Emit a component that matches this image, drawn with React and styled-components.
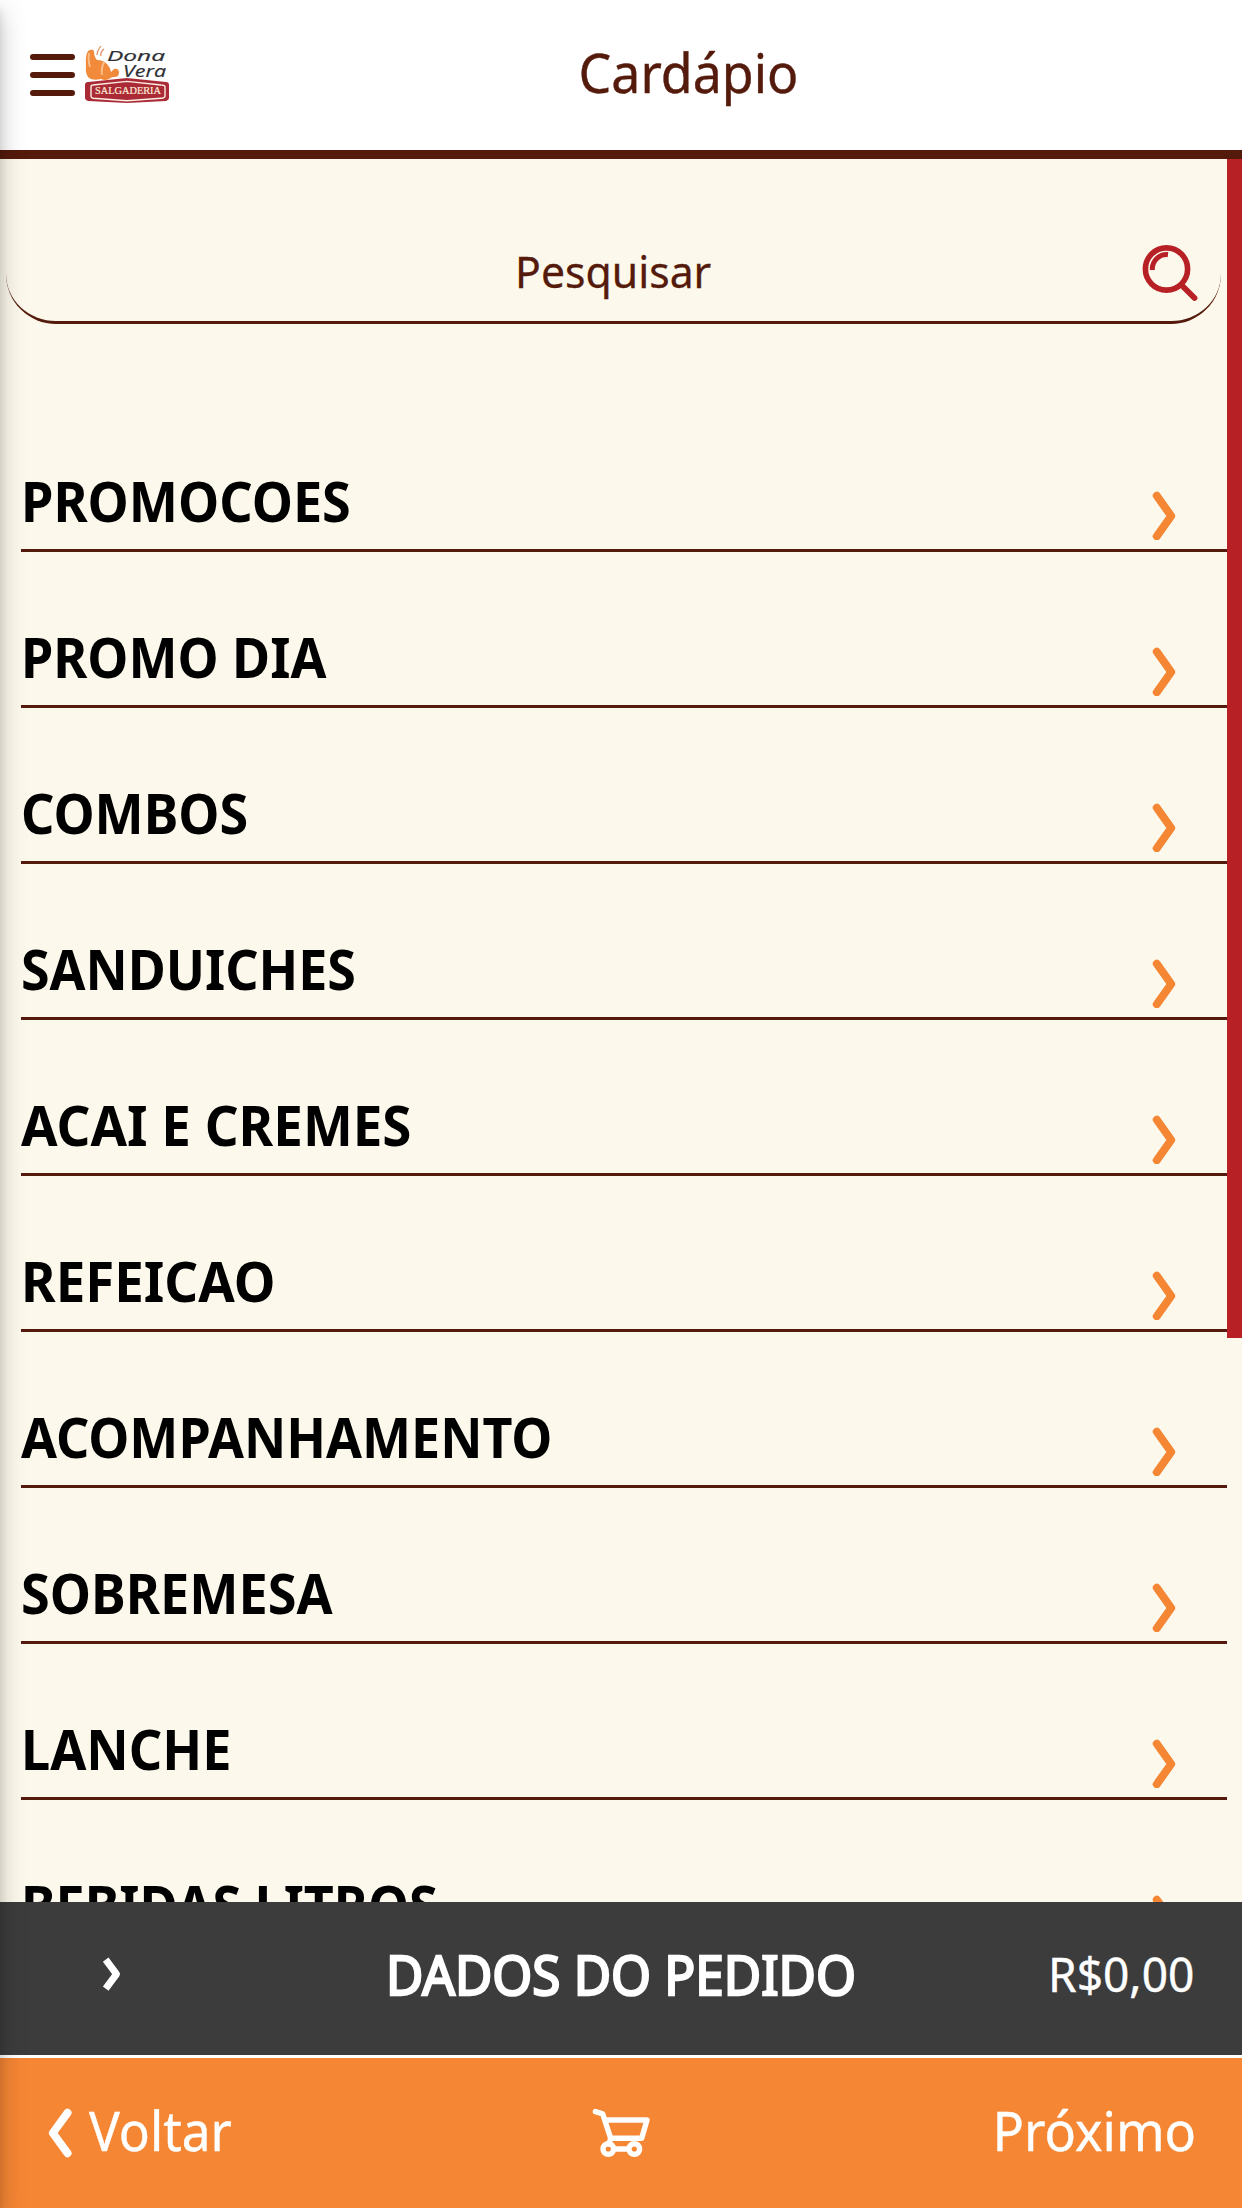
import React from "react";
import styled, { createGlobalStyle } from "styled-components";

const brown = "#541a0b";
const cream = "#fcf8ec";
const red = "#b72025";
const orange = "#f58634";

const GlobalStyle = createGlobalStyle`
  * { box-sizing: border-box; }
  body {
    margin: 0;
    overflow: hidden;
    font-family: "Noto Sans", "Open Sans", sans-serif;
  }
`;

const Screen = styled.div`
  display: flex;
  flex-direction: column;
  width: 1242px;
  height: 2208px;
  overflow: hidden;
  background: ${cream};
`;

const DrawerEdge = styled.div`
  position: fixed;
  top: 0;
  left: -400px;
  width: 400px;
  height: 2208px;
  pointer-events: none;
  box-shadow: 0 8px 10px -1px rgba(0, 0, 0, 0.12),
    0 16px 24px 0 rgba(0, 0, 0, 0.13), 0 6px 28px 2px rgba(0, 0, 0, 0.1);
`;

const Label = styled.span`
  display: block;
  white-space: nowrap;
  font-size: ${(p) => p.$size}px;
  font-weight: ${(p) => p.$weight || 400};
  line-height: 60px;
  -webkit-text-stroke: ${(p) => p.$stroke || 0}px currentColor;
  transform: scaleX(${(p) => p.$fit || 1});
  transform-origin: ${(p) => p.$origin || "center"};
`;

const Header = styled.header`
  display: flex;
  flex: none;
  align-items: center;
  height: 159px;
  padding: 0 38px 0 30px;
  background: #fff;
  color: ${brown};
  border-bottom: 9px solid ${brown};
`;

const MenuButton = styled.div`
  display: flex;
  flex-direction: column;
  gap: 12px;
  width: 45px;
`;

const MenuBar = styled.span`
  height: 6px;
  border-radius: 3px;
  background: ${brown};
`;

const LogoBox = styled.div`
  display: flex;
  width: 97px;
  padding-left: 9px;
`;

const Title = styled.h1`
  display: flex;
  flex: 1;
  justify-content: center;
  margin: 0;
  padding-bottom: 6px;
`;

const Body = styled.main`
  display: flex;
  flex: 1;
  min-height: 0;
  overflow: hidden;
`;

const Content = styled.div`
  flex: 1;
  padding-top: 60px;
`;

const ScrollTrack = styled.div`
  width: 15px;
`;

const ScrollThumb = styled.div`
  height: 1179px;
  background: ${red};
`;

const SearchField = styled.div`
  display: grid;
  grid-template-columns: 80px 1fr 80px;
  align-items: center;
  justify-items: center;
  height: 105px;
  margin: 0 6px 72px;
  padding-top: 2px;
  color: ${brown};
  border-bottom: 3px solid ${brown};
  border-radius: 50px;
`;

const SearchIcon = styled.svg`
  justify-self: start;
  margin: 4px 0 0 1px;
`;

const List = styled.ul`
  margin: 0;
  padding: 0 0 0 21px;
  list-style: none;
`;

const Row = styled.li`
  display: flex;
  align-items: flex-end;
  justify-content: space-between;
  height: 156px;
  padding-right: 50px;
  border-bottom: 3px solid ${brown};
  color: #000;
`;

const RowName = styled.div`
  padding-bottom: 18px;
`;

const RowArrow = styled.svg`
  margin-bottom: 9px;
`;

const OrderBar = styled.section`
  display: grid;
  grid-template-columns: 240px 1fr 240px;
  flex: none;
  align-items: center;
  justify-items: center;
  height: 153px;
  padding-bottom: 9px;
  background: #3c3c3c;
  color: #fff;
`;

const OrderArrow = styled.svg`
  justify-self: start;
  margin-left: 102px;
`;

const OrderTotal = styled.div`
  justify-self: end;
  margin-right: 48px;
`;

const NavBar = styled.nav`
  display: grid;
  grid-template-columns: 1fr 58px 1fr;
  flex: none;
  align-items: center;
  height: 153px;
  padding: 0 46px 6px 46px;
  border-top: 3px solid #fff;
  background: ${orange};
  color: #fff;
`;

const NavAction = styled.div`
  display: flex;
  align-items: center;
  gap: 17px;
  justify-content: ${(p) => (p.$end ? "flex-end" : "flex-start")};
`;

const NavIcon = styled.svg`
  margin-top: 6px;
`;

const categories = [
  ["PROMOCOES", 0.948],
  ["PROMO DIA", 0.945],
  ["COMBOS", 0.947],
  ["SANDUICHES", 0.944],
  ["ACAI E CREMES", 0.961],
  ["REFEICAO", 0.96],
  ["ACOMPANHAMENTO", 0.945],
  ["SOBREMESA", 0.949],
  ["LANCHE", 0.949],
  ["BEBIDAS LITROS", 0.945],
];

const Logo = () => (
  <svg width="88" height="64" viewBox="0 0 88 64">
    <path
      d="M4 8Q8 5 10 8Q10 14 13 17Q19 17 23 21Q26 24 27 29L30 26Q35 25 35 30Q35 34 30 34Q27 34 25 36Q21 38 17 36Q9 38 5 35Q1 31 2 23Q1 13 4 8Z"
      fill="#f28a3c"
    />
    <path d="M5 10Q4 18 6 24M20 19Q17 25 18 32" fill="none" stroke="#f9bd86" strokeWidth="2" />
    <path d="M13 12Q13 8 17 3M17 13Q16 9 20 6" fill="none" stroke="#d98a5a" strokeWidth="1.2" />
    <text x="23" y="17.6" fontFamily="Open Sans" fontStyle="italic" fontSize="15" fill="#2e2e33" stroke="#2e2e33" strokeWidth=".2" textLength="58" lengthAdjust="spacingAndGlyphs">Dona</text>
    <text x="39" y="33.8" fontFamily="Open Sans" fontStyle="italic" fontSize="17" fill="#2e2e33" stroke="#2e2e33" strokeWidth=".2" textLength="43" lengthAdjust="spacingAndGlyphs">Vera</text>
    <path d="M4 39L43 35L82 39Q85 39 85 42V55Q85 57 82 58L43 60L4 58Q1 57 1 55V42Q1 39 4 39Z" fill="#aa2b36" />
    <path d="M9 42L43 38.4L77 42Q81 42 81 44V53Q81 55 77 55.3L43 57.8L9 55.3Q7 55 7 53V44Q7 42 9 42Z" fill="none" stroke="#fbeee4" strokeWidth="1.4" />
    <text x="11" y="50.7" fontFamily="Liberation Serif" fontSize="10.5" fill="#fdebd8" stroke="#fdebd8" strokeWidth=".2" textLength="66" lengthAdjust="spacingAndGlyphs">SALGADERIA</text>
  </svg>
);

export default function App() {
  return (
    <Screen>
      <GlobalStyle />
      <Header>
        <MenuButton>
          <MenuBar />
          <MenuBar />
          <MenuBar />
        </MenuButton>
        <LogoBox>
          <Logo />
        </LogoBox>
        <Title>
          <Label $size={54} $fit={0.96} $stroke={0.4}>Cardápio</Label>
        </Title>
      </Header>
      <Body>
        <Content>
          <SearchField>
            <span />
            <Label $size={44.5} $fit={0.96} $stroke={0.3}>Pesquisar</Label>
            <SearchIcon width="58" height="58" fill="none" stroke={red}>
              <circle cx="24.5" cy="25" r="21.1" strokeWidth="5.6" />
              <path d="M10.3 26A14.3 14.8 0 0 1 26 10.6" strokeWidth="5" />
              <path d="M39.5 41L52.5 54" strokeWidth="5.8" strokeLinecap="round" />
            </SearchIcon>
          </SearchField>
          <List>
            {categories.map(([name, fit]) => (
              <Row key={name}>
                <RowName>
                  <Label $size={55} $weight={700} $fit={fit} $origin="left">{name}</Label>
                </RowName>
                <RowArrow width="26" height="50" fill="none" stroke={orange} strokeWidth="8" strokeLinecap="round" strokeLinejoin="round">
                  <path d="M5.8 5.8L20.2 26L5.8 46.2" />
                </RowArrow>
              </Row>
            ))}
          </List>
        </Content>
        <ScrollTrack>
          <ScrollThumb />
        </ScrollTrack>
      </Body>
      <OrderBar>
        <OrderArrow width="20" height="34" fill="none" stroke="#fff" strokeWidth="7" strokeLinejoin="round">
          <path d="M3.7 2.6L14.5 17.2L3.7 31.6" />
        </OrderArrow>
        <Label $size={54} $fit={0.948} $stroke={2.4}>DADOS DO PEDIDO</Label>
        <OrderTotal>
          <Label $size={47} $fit={0.98} $origin="right" $stroke={0.4}>R$0,00</Label>
        </OrderTotal>
      </OrderBar>
      <NavBar>
        <NavAction>
          <NavIcon width="26" height="50" fill="none" stroke="#fff" strokeWidth="8" strokeLinecap="round" strokeLinejoin="round">
            <path d="M21.5 4.8L6.8 25L21.5 45.2" />
          </NavIcon>
          <Label $size={54} $fit={0.952} $origin="left" $stroke={0.4}>Voltar</Label>
        </NavAction>
        <NavIcon width="58" height="50" fill="none" stroke="#fff" strokeWidth="5.4" strokeLinecap="round" strokeLinejoin="round">
          <path d="M3.4 3.6L10.7 5.8L18.7 30.3H49.7L55 12H13.7" />
          <circle cx="16.3" cy="41" r="5.3" />
          <circle cx="42.3" cy="41" r="5.3" />
          <path d="M22 41H36M18.7 30.3L17 36" />
        </NavIcon>
        <NavAction $end>
          <Label $size={54} $fit={0.965} $origin="right" $stroke={0.4}>Próximo</Label>
        </NavAction>
      </NavBar>
      <DrawerEdge />
    </Screen>
  );
}
